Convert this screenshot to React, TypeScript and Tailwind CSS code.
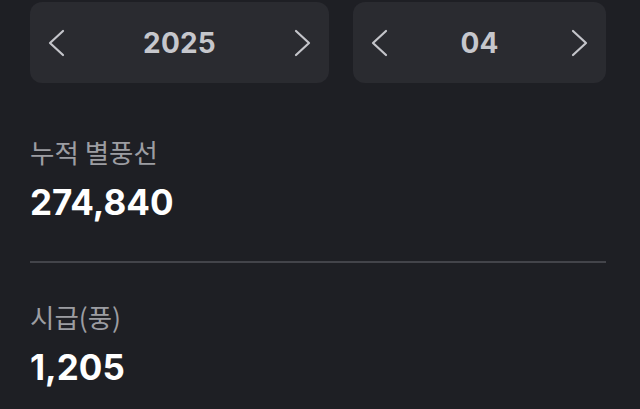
import React from "react";

const Chevron = ({ dir }: { dir: "left" | "right" }) => (
  <svg width="20" height="28" viewBox="0 0 20 28" fill="none">
    <path
      d={dir === "left" ? "M16 2 L3 14 L16 26" : "M4 2 L17 14 L4 26"}
      stroke="#c4c5ca"
      strokeWidth="2.2"
      strokeLinecap="round"
      strokeLinejoin="round"
    />
  </svg>
);

const Stepper = ({ value, w }: { value: string; w: string }) => (
  <div className={`${w} h-[81px] rounded-[12px] bg-[#2a2b30] flex items-center justify-between px-[17px]`}>
    <Chevron dir="left" />
    <span className="text-[28px] font-bold text-[#c6c7cc] font-['Inter','Noto_Sans',sans-serif] tracking-[0.2px]">{value}</span>
    <Chevron dir="right" />
  </div>
);

export default function App() {
  return (
    <div className="w-[640px] h-[409px] bg-[#1e1f24] overflow-hidden font-['Inter','Noto_Sans_CJK_KR',sans-serif]">
      <div className="flex gap-[24px] pl-[30px] pt-[2px]">
        <Stepper value="2025" w="w-[299px]" />
        <Stepper value="04" w="w-[253px]" />
      </div>
      <div className="pl-[30px] pr-[34px]">
        <div className="pt-[52px]">
          <div className="text-[26.5px] leading-[34px] text-[#9c9da2] font-['Noto_Sans_CJK_KR',sans-serif]">누적 별풍선</div>
          <div className="text-[35px] leading-[42px] font-bold text-white mt-[12px]">274,840</div>
        </div>
        <div className="h-[2px] bg-[#43444a] mt-[38px]" />
        <div className="pt-[37px]">
          <div className="text-[26.5px] leading-[34px] text-[#9c9da2] font-['Noto_Sans_CJK_KR',sans-serif]">시급(풍)</div>
          <div className="text-[35px] leading-[42px] font-bold text-white mt-[12px]">1,205</div>
        </div>
      </div>
    </div>
  );
}
